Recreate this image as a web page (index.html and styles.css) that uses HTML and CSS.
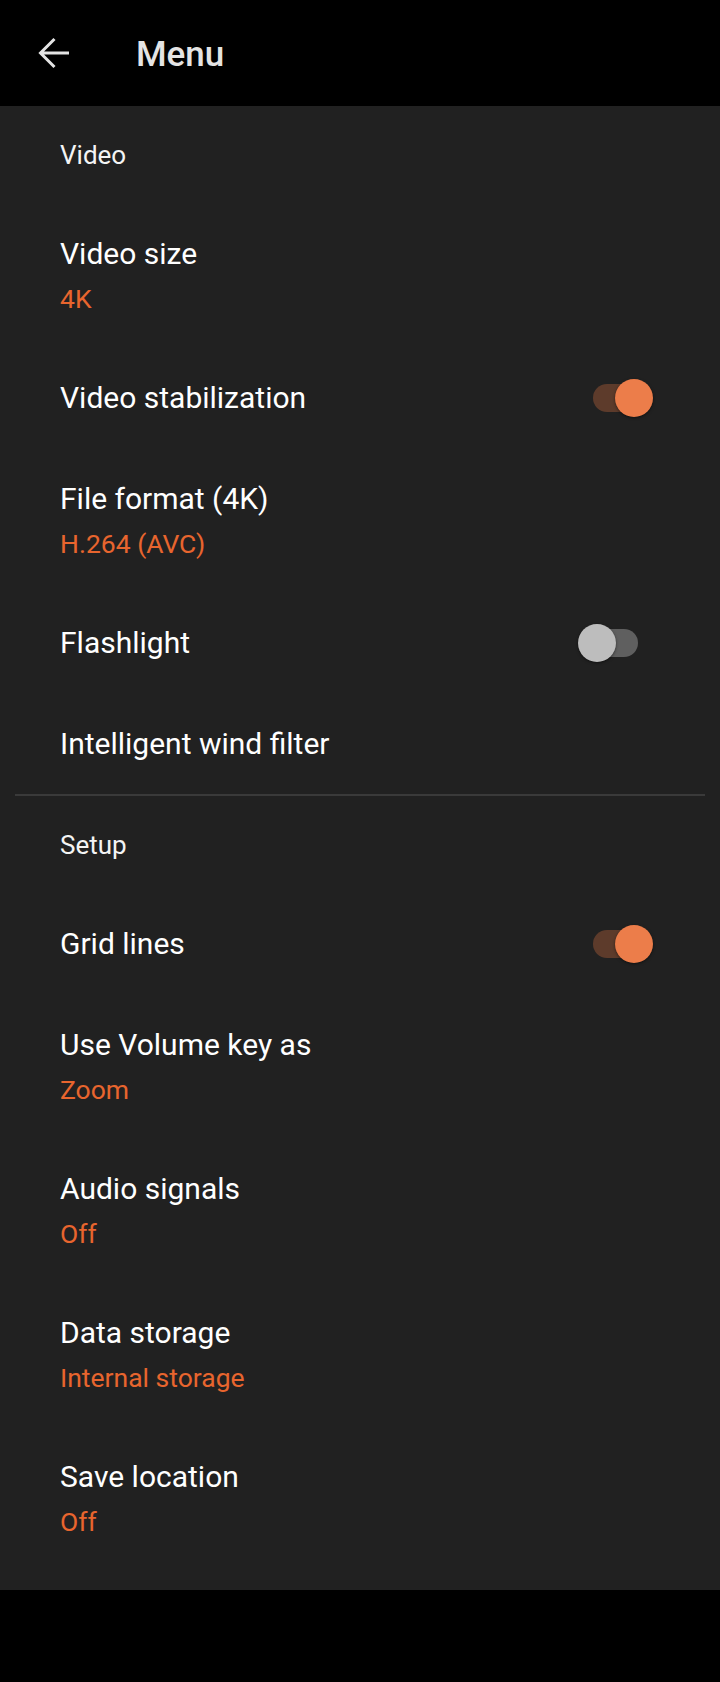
FILE: index.html
```html
<!DOCTYPE html>
<html lang="en">
<head>
  <meta charset="UTF-8">
  <meta name="viewport" content="width=device-width, initial-scale=1.0">
  <title>Menu</title>
  <link rel="stylesheet" href="styles.css">
</head>
<body>
  <div class="toolbar">
    <svg class="back" width="32" height="32" viewBox="0 0 32 32">
      <path d="M31 16H2.5M16.5 2L2.5 16l14 14" fill="none" stroke="#e4e4e4" stroke-width="3"/>
    </svg>
    <h1>Menu</h1>
  </div>
  <div class="prefs">
    <div class="category">Video</div>
    <div class="pref">
      <div class="pref-text">
        <div class="title">Video size</div>
        <div class="summary">4K</div>
      </div>
    </div>
    <div class="pref">
      <div class="pref-text">
        <div class="title">Video stabilization</div>
      </div>
      <span class="switch on"><span class="track"></span><span class="thumb"></span></span>
    </div>
    <div class="pref">
      <div class="pref-text">
        <div class="title">File format (4K)</div>
        <div class="summary">H.264 (AVC)</div>
      </div>
    </div>
    <div class="pref">
      <div class="pref-text">
        <div class="title">Flashlight</div>
      </div>
      <span class="switch"><span class="track"></span><span class="thumb"></span></span>
    </div>
    <div class="pref">
      <div class="pref-text">
        <div class="title">Intelligent wind filter</div>
      </div>
    </div>
    <hr class="divider">
    <div class="category">Setup</div>
    <div class="pref">
      <div class="pref-text">
        <div class="title">Grid lines</div>
      </div>
      <span class="switch on"><span class="track"></span><span class="thumb"></span></span>
    </div>
    <div class="pref">
      <div class="pref-text">
        <div class="title">Use Volume key as</div>
        <div class="summary">Zoom</div>
      </div>
    </div>
    <div class="pref">
      <div class="pref-text">
        <div class="title">Audio signals</div>
        <div class="summary">Off</div>
      </div>
    </div>
    <div class="pref">
      <div class="pref-text">
        <div class="title">Data storage</div>
        <div class="summary">Internal storage</div>
      </div>
    </div>
    <div class="pref">
      <div class="pref-text">
        <div class="title">Save location</div>
        <div class="summary">Off</div>
      </div>
    </div>
  </div>
</body>
</html>
```

FILE: styles.css
```css
body {
  margin: 0;
  background: #000;
  font-family: Roboto, "Noto Sans", sans-serif;
  color: #fff;
}
.toolbar {
  display: flex;
  align-items: center;
  height: 106px;
  padding-left: 38px;
  background: #000;
}
.toolbar .back {
  display: block;
}
.toolbar h1 {
  margin: 0 0 0 66px;
  padding-top: 4px;
  font-size: 35px;
  line-height: 40px;
  font-weight: 500;
  color: #e4e4e4;
}
.prefs {
  background: #212121;
  padding-bottom: 21px;
}
.category {
  height: 32px;
  padding: 33px 0 31px 60px;
  font-size: 26px;
  line-height: 32px;
  color: #f4f4f4;
}
.pref {
  display: flex;
  align-items: center;
  padding: 34px 67px 31px 60px;
}
.pref-text {
  flex: 1;
}
.title {
  font-size: 30px;
  line-height: 36px;
  color: #fff;
}
.summary {
  margin-top: 11px;
  font-size: 26.5px;
  line-height: 32px;
  color: #e8652e;
}
.divider {
  margin: 1px 15px 0 15px;
  border: 0;
  height: 2px;
  background: #3a3a3a;
}
.switch {
  position: relative;
  width: 75px;
  height: 36px;
}
.switch .track {
  position: absolute;
  left: 15px;
  top: 4px;
  width: 45px;
  height: 28px;
  border-radius: 14px;
  background: #5f5f5f;
}
.switch .thumb {
  position: absolute;
  left: 0;
  top: -1px;
  width: 38px;
  height: 38px;
  border-radius: 50%;
  background: #bdbdbd;
  box-shadow: 0 1px 3px rgba(0, 0, 0, 0.5);
}
.switch.on .track {
  background: #5d3b2b;
}
.switch.on .thumb {
  left: 37px;
  background: #ec7d4a;
}
```
